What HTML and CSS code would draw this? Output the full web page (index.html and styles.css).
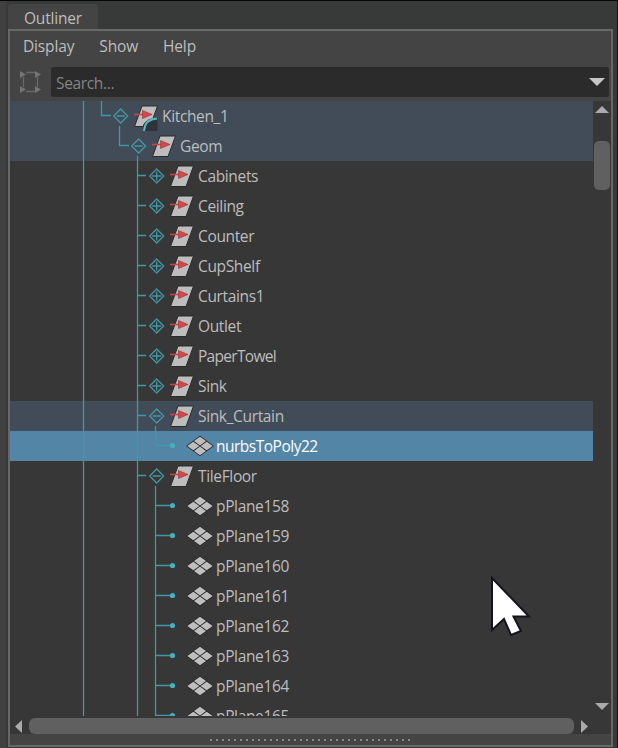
FILE: index.html
```html
<!DOCTYPE html>
<html lang="en">
<head>
<meta charset="utf-8">
<title>Outliner</title>
<link rel="stylesheet" href="styles.css">
</head>
<body>
<svg class="defs" aria-hidden="true">
  <symbol id="group" viewBox="0 0 24 30">
    <path d="M8 5H23.5L16 25.5H.5Z" fill="#bdbdbd" stroke="#2b2b2b"/>
    <path d="M0 13.5H9" stroke="#c94348" stroke-width="1.6"/>
    <path d="M8.5 9.5L18 13.5L8.5 17.5Z" fill="#d6474b" stroke="#963035" stroke-width=".6"/>
  </symbol>
  <symbol id="mesh" viewBox="0 0 28 30">
    <path d="M14 4.8L28 15L14 25.2L0 15Z" fill="#292929"/>
    <path d="M14 5.8L20 10.1L14 14.4L8 10.1ZM7.3 10.7L13.3 15L7.3 19.3L1.3 15ZM20.7 10.7L26.7 15L20.7 19.3L14.7 15ZM14 15.6L20 19.9L14 24.2L8 19.9Z" fill="#bfbfbf"/>
  </symbol>
  <symbol id="minus" viewBox="0 0 16 30"><path d="M8 8L15 15L8 22L1 15ZM4 15H12" class="line"/></symbol>
  <symbol id="plus" viewBox="0 0 16 30"><path d="M8 8L15 15L8 22L1 15ZM3.5 15H12.5M8 10.5V19.5" class="line"/></symbol>
  <symbol id="branch-closed" viewBox="0 0 188 30">
    <path d="M73.5 0V30M127.5 0V30M128 14.5H136" class="line"/>
    <use href="#plus" x="138.7" width="16" height="30"/><use href="#group" x="160" width="24" height="30"/>
  </symbol>
  <symbol id="branch-open" viewBox="0 0 188 30">
    <path d="M73.5 0V30M127.5 0V30M128 14.5H136M145.5 25V30" class="line"/>
    <use href="#minus" x="138.7" width="16" height="30"/><use href="#group" x="160" width="24" height="30"/>
  </symbol>
  <symbol id="leaf" viewBox="0 0 206 30">
    <path d="M73.5 0V30M127.5 0V30M145.5 0V30M146 14.5H162" class="line"/>
    <circle cx="162.5" cy="14.5" r="2.6" class="dot"/><use href="#mesh" x="176" width="28" height="30"/>
  </symbol>
</svg>
<main class="window">
  <div class="tab">Outliner</div>
  <section class="panel">
    <nav class="menu"><span>Display</span><span>Show</span><span>Help</span></nav>
    <div class="search-row">
      <svg class="expand" width="24" height="24" viewBox="0 0 24 24"><path d="M7 2.5H16M7 21.5H16M4.5 7V17M18.5 7V17" fill="none" stroke="#686868" stroke-width="1.3"/><path d="M1 1L7 4.5L1 8ZM16 1L22 4.5L16 8ZM1 16L7 19.5L1 23ZM16 16L22 19.5L16 23Z" fill="#747474"/></svg>
      <div class="search"><span>Search...</span><svg width="16" height="8" viewBox="0 0 16 8"><path d="M0 0H16L8 8Z" fill="#c7c7c7"/></svg></div>
    </div>
    <div class="body">
      <div class="tree">
        <div class="row parent"><svg width="152" height="30"><path d="M73.5 0V30M91.5 0V14.5H101M109.5 25V30" class="line"/><use href="#minus" x="102.7" width="16" height="30"/><use href="#group" x="124" width="24" height="30"/><path d="M133 30V24Q137 17 147.5 16V30Z" fill="#303438"/><path d="M134 30Q135 18 147 17.5" fill="none" stroke="#55b7c8" stroke-width="2"/></svg><span>Kitchen_1</span></div>
        <div class="row parent"><svg width="170" height="30"><path d="M73.5 0V30M109.5 0V14.5H119M127.5 25V30" class="line"/><use href="#minus" x="120.7" width="16" height="30"/><use href="#group" x="142" width="24" height="30"/></svg><span>Geom</span></div>
        <div class="row"><svg width="188" height="30"><use href="#branch-closed"/></svg><span>Cabinets</span></div>
        <div class="row"><svg width="188" height="30"><use href="#branch-closed"/></svg><span>Ceiling</span></div>
        <div class="row"><svg width="188" height="30"><use href="#branch-closed"/></svg><span>Counter</span></div>
        <div class="row"><svg width="188" height="30"><use href="#branch-closed"/></svg><span>CupShelf</span></div>
        <div class="row"><svg width="188" height="30"><use href="#branch-closed"/></svg><span>Curtains1</span></div>
        <div class="row"><svg width="188" height="30"><use href="#branch-closed"/></svg><span>Outlet</span></div>
        <div class="row"><svg width="188" height="30"><use href="#branch-closed"/></svg><span class="tight">PaperTowel</span></div>
        <div class="row"><svg width="188" height="30"><use href="#branch-closed"/></svg><span>Sink</span></div>
        <div class="row parent"><svg width="188" height="30"><use href="#branch-open"/></svg><span>Sink_Curtain</span></div>
        <div class="row selected"><svg width="206" height="30"><path d="M73.5 0V30M127.5 0V30M145.5 0V14.5H162" class="line"/><circle cx="162.5" cy="14.5" r="2.6" class="dot"/><use href="#mesh" x="176" width="28" height="30"/></svg><span>nurbsToPoly22</span></div>
        <div class="row"><svg width="188" height="30"><use href="#branch-open"/></svg><span>TileFloor</span></div>
        <div class="row"><svg width="206" height="30"><use href="#leaf"/></svg><span>pPlane158</span></div>
        <div class="row"><svg width="206" height="30"><use href="#leaf"/></svg><span>pPlane159</span></div>
        <div class="row"><svg width="206" height="30"><use href="#leaf"/></svg><span>pPlane160</span></div>
        <div class="row"><svg width="206" height="30"><use href="#leaf"/></svg><span>pPlane161</span></div>
        <div class="row"><svg width="206" height="30"><use href="#leaf"/></svg><span>pPlane162</span></div>
        <div class="row"><svg width="206" height="30"><use href="#leaf"/></svg><span>pPlane163</span></div>
        <div class="row"><svg width="206" height="30"><use href="#leaf"/></svg><span>pPlane164</span></div>
        <div class="row"><svg width="206" height="30"><use href="#leaf"/></svg><span>pPlane165</span></div>
      </div>
      <div class="vscroll"><svg width="14" height="7"><path d="M0 7L7 0L14 7Z" class="arrow"/></svg><div class="vthumb"></div><svg width="14" height="7"><path d="M0 0H14L7 7Z" class="arrow"/></svg></div>
    </div>
    <div class="hscroll"><svg width="7" height="13"><path d="M7 0V13L0 6.5Z" class="arrow"/></svg><div class="hthumb"></div><svg width="7" height="13"><path d="M0 0V13L7 6.5Z" class="arrow"/></svg></div>
    <div class="grip"><div></div></div>
  </section>
</main>
<svg class="cursor" width="42" height="64" viewBox="0 0 42 64"><path d="M2 2V54L14 43L21 59L31 55L23.5 40.5H39Z" fill="#fff" stroke="#16131e" stroke-width="2"/></svg>
</body>
</html>
```

FILE: styles.css
```css
* { box-sizing: border-box; }
body { margin: 0; width: 618px; height: 748px; overflow: hidden; background: #383a3a; color: #bdbdbd; font: 15.5px/20px "Open Sans", "Noto Sans", sans-serif; letter-spacing: -0.35px; }
svg { display: block; flex: none; }
.defs { position: absolute; width: 0; height: 0; }
.window { height: 748px; padding: 3px 4px 1px 8px; border-top: 1px solid #050505; border-right: 1px solid #151515; box-shadow: inset 6px 0 #404040; }
.tab { width: 90px; height: 25px; padding: 4px 0 0 16px; background: #444; border-radius: 3px 3px 0 0; letter-spacing: -0.2px; }
.panel { width: 605px; height: 718px; border: 2px solid #686868; background: #444; }
.menu { height: 36px; display: flex; align-items: center; gap: 25px; padding: 0 0 6px 13px; letter-spacing: -0.15px; }
.search-row { height: 34px; display: flex; align-items: center; gap: 8px; padding: 0 2px 5px 9px; }
.search { flex: 1; height: 30px; display: flex; align-items: center; justify-content: space-between; padding: 0 4px 0 5px; background: #2b2b2b; color: #858585; border-radius: 3px; }
.search span { padding-top: 2px; }
.body { height: 615px; display: flex; background: #373737; }
.tree { width: 583px; height: 615px; overflow: hidden; }
.row { height: 30px; display: flex; align-items: center; white-space: nowrap; }
.row span { padding-bottom: 1px; }
.tight { letter-spacing: -0.7px; }
.parent { background: #414c58; }
.selected { background: #5285a6; color: #fff; letter-spacing: -0.5px; }
.line { fill: none; stroke: #4397a5; stroke-width: 1.3; }
.dot { fill: #45afbd; }
.arrow { fill: #aaa; }
.vscroll { width: 18px; display: flex; flex-direction: column; align-items: center; padding: 5px 1px 6px 0; }
.vthumb { width: 16px; height: 49px; margin: 28px 0 auto; background: #606060; border-radius: 5px; }
.hscroll { height: 18px; display: flex; align-items: center; gap: 7px; padding: 2px 0 0 5px; background: #373737; }
.hthumb { width: 545px; height: 16px; background: #606060; border-radius: 6px; }
.grip { height: 11px; display: flex; justify-content: center; align-items: center; }
.grip div { width: 202px; height: 2px; background: repeating-linear-gradient(90deg, #898989 0 2px, transparent 2px 6px); }
.cursor { position: absolute; left: 490px; top: 576px; }
```
